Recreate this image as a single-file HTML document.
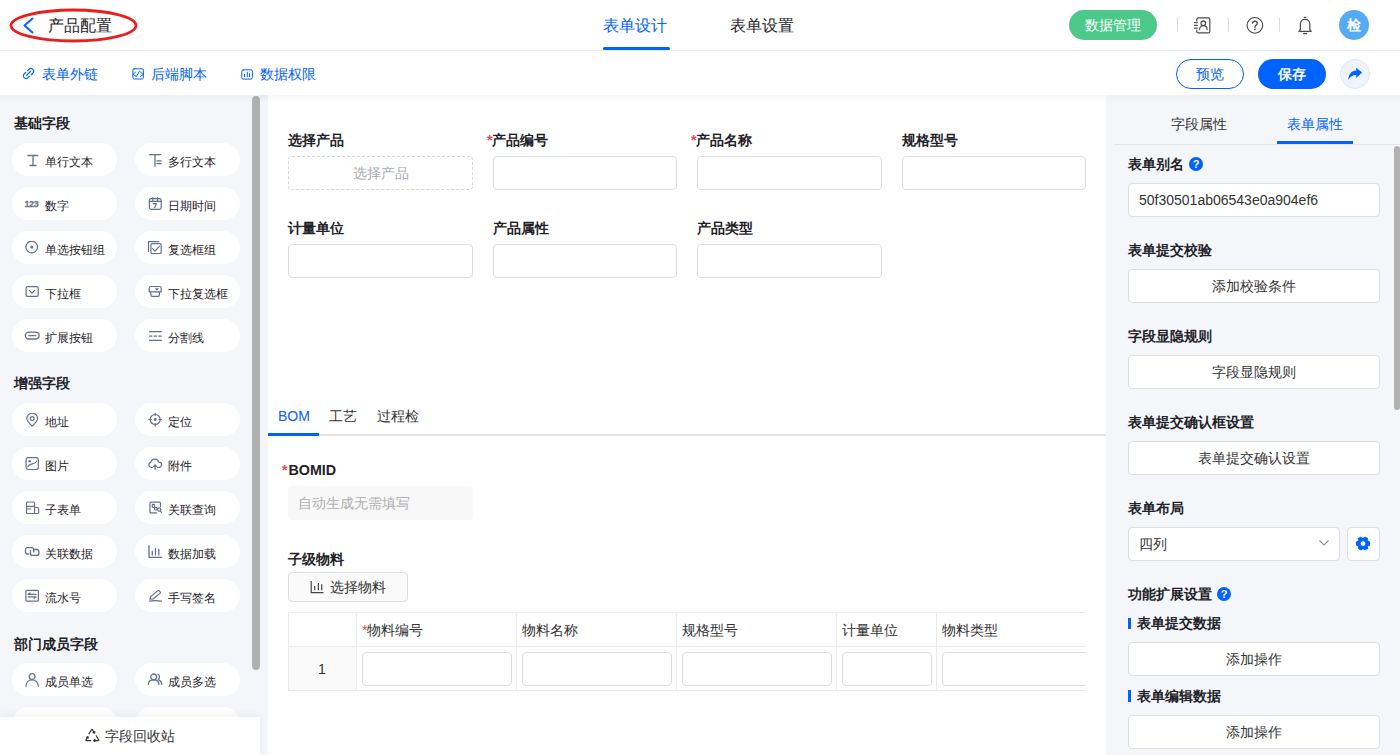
<!DOCTYPE html>
<html><head><meta charset="utf-8">
<style>
*{box-sizing:border-box;margin:0;padding:0}
html,body{width:1400px;height:755px;overflow:hidden;background:#f4f6fa;font-family:"Liberation Sans",sans-serif;color:#333;font-size:14px}
.a{position:absolute}
.t{position:absolute;white-space:nowrap;line-height:20px}
#hdr{left:0;top:0;width:1400px;height:51px;background:#fff;border-bottom:1px solid #ebedf0}
#tb{left:0;top:51px;width:1400px;height:44px;background:#fff;box-shadow:0 2px 6px rgba(0,0,0,.04)}
#left{left:0;top:95px;width:260px;height:660px;background:#f4f6fa}
#canvas{left:268px;top:95px;width:838px;height:660px;background:#fff}
#right{left:1106px;top:95px;width:294px;height:660px;background:#f4f6fa}
.h{font-weight:bold;color:#1f2329;font-size:14px}
.chip{position:absolute;width:105px;height:33px;background:#fff;border-radius:17px}
.chip .ic{position:absolute;left:12px;top:10px;width:16px;height:16px}
.chip .lb{position:absolute;left:33px;top:11px;font-size:12px;line-height:17px;color:#1f2329;white-space:nowrap}
.lbl{position:absolute;font-weight:bold;color:#1f2329;font-size:14px;line-height:20px;white-space:nowrap}
.star{color:#e5484d;font-weight:bold}
.inp{position:absolute;width:185px;height:34px;background:#fff;border:1px solid #dddddd;border-radius:4px}
.rbtn{position:absolute;left:1128px;width:252px;height:34px;background:#fff;border:1px solid #dedede;border-radius:4px;text-align:center;line-height:32px;color:#333;font-size:14px}
.rl{position:absolute;left:1128px;font-weight:bold;color:#1f2329;font-size:14px;line-height:20px;white-space:nowrap}
.q{position:absolute;width:14px;height:14px;border-radius:50%;background:#0062ff;color:#fff;font-size:11px;font-weight:bold;line-height:14px;text-align:center}
.th{position:absolute;top:612px;height:34px;line-height:34px;font-size:14px;color:#333;white-space:nowrap}
.tinp{position:absolute;top:652px;height:34px;background:#fff;border:1px solid #dddddd;border-radius:4px}
</style></head><body>
<div id="hdr" class="a"></div>
<div id="tb" class="a"></div>
<div id="left" class="a"></div>
<div id="canvas" class="a"></div>
<div id="right" class="a"></div>

<!-- LEFT PANEL -->
<div class="a" style="left:0;top:95px;width:1400px;height:9px;background:linear-gradient(rgba(0,0,0,.03),rgba(0,0,0,0));z-index:5"></div>
<div class="t h" style="left:14px;top:112.5px">基础字段</div>
<div class="chip" style="left:12px;top:143px"><svg class="ic" width="16" height="16" viewBox="0 0 16 16" fill="none" stroke="#66708a" stroke-width="1.3" stroke-linecap="round" stroke-linejoin="round"><path d="M4 2.5 H13.8 M9 2.5 V12.5 M6 12.5 H12"/></svg><div class="lb">单行文本</div></div>
<div class="chip" style="left:135px;top:143px"><svg class="ic" width="16" height="16" viewBox="0 0 16 16" fill="none" stroke="#66708a" stroke-width="1.3" stroke-linecap="round" stroke-linejoin="round"><path d="M2.4 1.6 H13.6 M8 1.6 V13.2 M9.9 7.9 H14.2 M9.9 10.6 H14.2"/></svg><div class="lb">多行文本</div></div>
<div class="chip" style="left:12px;top:187px"><svg class="ic" width="18" height="14" viewBox="0 0 18 14" style="left:12px;top:10px"><text x="0.5" y="9.6" font-family="Liberation Sans" font-weight="bold" font-size="10.2" letter-spacing="-0.4" fill="#6f7891" stroke="#6f7891" stroke-width="0.35">123</text></svg><div class="lb">数字</div></div>
<div class="chip" style="left:135px;top:187px"><svg class="ic" width="16" height="16" viewBox="0 0 16 16" fill="none" stroke="#66708a" stroke-width="1.2" stroke-linecap="round" stroke-linejoin="round"><rect x="2.4" y="1.6" width="11.8" height="10.8" rx="1.8"/><path d="M2.4 4.4 H14.2 M5.9 0.6 V3.6 M10.5 0.6 V3.6 M6 6.6 H9.4 L7.7 10.6"/></svg><div class="lb">日期时间</div></div>
<div class="chip" style="left:12px;top:231px"><svg class="ic" width="16" height="16" viewBox="0 0 16 16" fill="none" stroke="#66708a" stroke-width="1.2" stroke-linecap="round" stroke-linejoin="round"><circle cx="7.7" cy="6" r="5.8"/><circle cx="7.7" cy="6" r="1.5" fill="#66708a" stroke="none"/></svg><div class="lb">单选按钮组</div></div>
<div class="chip" style="left:135px;top:231px"><svg class="ic" width="16" height="16" viewBox="0 0 16 16" fill="none" stroke="#66708a" stroke-width="1.2" stroke-linecap="round" stroke-linejoin="round"><path d="M1.5 10.5 V0.6 H11.8"/><rect x="3.9" y="2.7" width="10.3" height="9.8" rx="1.3"/><path d="M5.5 7.6 L8 10 L12.4 5.3"/></svg><div class="lb">复选框组</div></div>
<div class="chip" style="left:12px;top:275px"><svg class="ic" width="16" height="16" viewBox="0 0 16 16" fill="none" stroke="#66708a" stroke-width="1.2" stroke-linecap="round" stroke-linejoin="round"><rect x="2.1" y="1.6" width="12.1" height="9.8" rx="1.3"/><path d="M5.3 5.3 L8 8 L10.6 5.3"/></svg><div class="lb">下拉框</div></div>
<div class="chip" style="left:135px;top:275px"><svg class="ic" width="16" height="16" viewBox="0 0 16 16" fill="none" stroke="#66708a" stroke-width="1.2" stroke-linecap="round" stroke-linejoin="round"><path d="M3.8 6.8 H2.2 V2.9 Q2.2 1.5 3.6 1.5 H12.8 Q14.2 1.5 14.2 2.9 V6.8 H12.4 M3.8 6.8 H12.4 V9.9 Q12.4 11.3 11 11.3 H5.2 Q3.8 11.3 3.8 9.9 Z M8.8 3.4 L9.9 4.8 L11 3.4"/></svg><div class="lb">下拉复选框</div></div>
<div class="chip" style="left:12px;top:319px"><svg class="ic" width="16" height="16" viewBox="0 0 16 16" fill="none" stroke="#66708a" stroke-width="1.3" stroke-linecap="round" stroke-linejoin="round"><rect x="1.3" y="3.2" width="13.8" height="6.8" rx="3.4"/><path d="M4.8 6.6 H11.7"/></svg><div class="lb">扩展按钮</div></div>
<div class="chip" style="left:135px;top:319px"><svg class="ic" width="16" height="16" viewBox="0 0 16 16" fill="none" stroke="#66708a" stroke-width="1.3" stroke-linecap="round" stroke-linejoin="round"><path d="M2.6 2.7 H14.3 M2.6 7.1 H4.8 M6.9 7.1 H9.6 M11.7 7.1 H14.3 M2.6 11.4 H14.3"/></svg><div class="lb">分割线</div></div>
<div class="t h" style="left:14px;top:372.7px">增强字段</div>
<div class="chip" style="left:12px;top:403px"><svg class="ic" width="16" height="16" viewBox="0 0 16 16" fill="none" stroke="#66708a" stroke-width="1.2" stroke-linecap="round" stroke-linejoin="round"><path d="M8.2 13 C4.6 9.8 2.8 7.8 2.8 5.5 A5.4 5.4 0 0 1 13.6 5.5 C13.6 7.8 11.8 9.8 8.2 13 Z"/><circle cx="8.2" cy="5.5" r="1.9"/></svg><div class="lb">地址</div></div>
<div class="chip" style="left:135px;top:403px"><svg class="ic" width="16" height="16" viewBox="0 0 16 16" fill="none" stroke="#66708a" stroke-width="1.2" stroke-linecap="round" stroke-linejoin="round"><circle cx="8.2" cy="6.5" r="5"/><circle cx="8.2" cy="6.5" r="0.9" fill="#66708a"/><path d="M8.2 0.2 V2.6 M8.2 10.4 V12.8 M1.9 6.5 H4.3 M12.1 6.5 H14.5"/></svg><div class="lb">定位</div></div>
<div class="chip" style="left:12px;top:447px"><svg class="ic" width="16" height="16" viewBox="0 0 16 16" fill="none" stroke="#66708a" stroke-width="1.2" stroke-linecap="round" stroke-linejoin="round"><rect x="2.1" y="0.7" width="12.2" height="11.8" rx="2"/><path d="M3.8 9.8 C4.6 7.4 6 7.2 8.5 6.8 C10.5 6.4 11.8 5.6 12.6 4.3"/><circle cx="5.8" cy="4.3" r="0.7" fill="#66708a"/></svg><div class="lb">图片</div></div>
<div class="chip" style="left:135px;top:447px"><svg class="ic" width="16" height="16" viewBox="0 0 16 16" fill="none" stroke="#66708a" stroke-width="1.2" stroke-linecap="round" stroke-linejoin="round"><path d="M5.6 10.5 H4.2 A2.6 2.6 0 0 1 3.8 5.4 A4.1 4.1 0 0 1 11.8 5.1 A2.7 2.7 0 0 1 12 10.5 H10.6 M8.1 12.6 V8 M6.4 9.6 L8.1 7.9 L9.8 9.6"/></svg><div class="lb">附件</div></div>
<div class="chip" style="left:12px;top:491px"><svg class="ic" width="16" height="16" viewBox="0 0 16 16" fill="none" stroke="#66708a" stroke-width="1.2" stroke-linecap="round" stroke-linejoin="round"><path d="M10.6 12.5 H3.5 Q2.5 12.5 2.5 11.5 V2 Q2.5 1 3.5 1 H9.6 Q10.6 1 10.6 2 V12.5 H13.6 Q14.6 12.5 14.6 11.5 V7.5 Q14.6 6.5 13.6 6.5 H10.6 M2.5 5.3 H10.6 M2.5 8 H6.9"/></svg><div class="lb">子表单</div></div>
<div class="chip" style="left:135px;top:491px"><svg class="ic" width="16" height="16" viewBox="0 0 16 16" fill="none" stroke="#66708a" stroke-width="1.2" stroke-linecap="round" stroke-linejoin="round"><path d="M9.7 11.8 H4.2 Q2.9 11.8 2.9 10.5 V2.5 Q2.9 1.2 4.2 1.2 H12.2 Q13.5 1.2 13.5 2.5 V5.6"/><rect x="5.3" y="3.3" width="2.2" height="3.2" rx="0.5"/><rect x="7.6" y="6.6" width="2.4" height="2.4" rx="0.5"/><circle cx="12.2" cy="8.5" r="1.6"/><path d="M13.3 9.8 L14.4 11.5"/></svg><div class="lb">关联查询</div></div>
<div class="chip" style="left:12px;top:535px"><svg class="ic" width="16" height="16" viewBox="0 0 16 16" fill="none" stroke="#66708a" stroke-width="1.3" stroke-linecap="round" stroke-linejoin="round"><path d="M4.8 9 H3.5 Q1.5 9 1.5 7 V4.7 Q1.5 2.7 3.5 2.7 H7.7 Q9.7 2.7 9.7 4.7 V7 M6.5 5.6 V8.4 Q6.5 10.4 8.5 10.4 H12.8 Q14.8 10.4 14.8 8.4 V6.5 Q14.8 4.5 12.8 4.5 H10"/></svg><div class="lb">关联数据</div></div>
<div class="chip" style="left:135px;top:535px"><svg class="ic" width="16" height="16" viewBox="0 0 16 16" fill="none" stroke="#66708a" stroke-width="1.3" stroke-linecap="round" stroke-linejoin="round"><path d="M2 0.6 V12.4 H14.7 M5.3 6.2 V10 M8.5 3.4 V10 M11.8 4.2 V10"/></svg><div class="lb">数据加载</div></div>
<div class="chip" style="left:12px;top:579px"><svg class="ic" width="16" height="16" viewBox="0 0 16 16" fill="none" stroke="#66708a" stroke-width="1.2" stroke-linecap="round" stroke-linejoin="round"><rect x="1.9" y="1.4" width="12.5" height="10.7" rx="1"/><path d="M4.1 5.3 H12 M4.1 5.3 L6 3.9 M4.1 7.9 H12 L10.2 9.3"/></svg><div class="lb">流水号</div></div>
<div class="chip" style="left:135px;top:579px"><svg class="ic" width="16" height="16" viewBox="0 0 16 16" fill="none" stroke="#66708a" stroke-width="1.2" stroke-linecap="round" stroke-linejoin="round"><path d="M3 10.2 L3.6 7.6 L10.9 1.6 Q11.4 1.2 11.9 1.7 L13.3 3.2 Q13.7 3.7 13.2 4.1 L6 10 Z M2.6 12.2 C6 11.4 10 11.4 14.5 12.2"/></svg><div class="lb">手写签名</div></div>
<div class="t h" style="left:14px;top:633.5px">部门成员字段</div>
<div class="chip" style="left:12px;top:663px"><svg class="ic" width="16" height="16" viewBox="0 0 16 16" fill="none" stroke="#66708a" stroke-width="1.3" stroke-linecap="round" stroke-linejoin="round"><circle cx="8.1" cy="3.6" r="2.9"/><path d="M2 13.2 C2 9 5 6.8 8.1 6.8 C11.2 6.8 14.4 9 14.4 13.2"/></svg><div class="lb">成员单选</div></div>
<div class="chip" style="left:135px;top:663px"><svg class="ic" width="16" height="16" viewBox="0 0 16 16" fill="none" stroke="#66708a" stroke-width="1.3" stroke-linecap="round" stroke-linejoin="round"><circle cx="6.7" cy="3.9" r="2.9"/><path d="M1.4 11.6 C1.4 8.5 3.8 6.8 6.7 6.8 C9.6 6.8 11.9 8.5 11.9 11.6 M11 1.3 C12.8 1.9 13 5.4 11.3 6.4 M11.8 7 C13.6 7.6 14.7 9.5 14.7 11.6"/></svg><div class="lb">成员多选</div></div>
<div class="chip" style="left:12px;top:707px"><div class="lb"></div></div>
<div class="chip" style="left:135px;top:707px"><div class="lb"></div></div>
<div class="a" style="left:252px;top:96px;width:8px;height:574px;border-radius:4px;background:#b1b1b1"></div>
<div class="a" style="left:0;top:717px;width:260px;height:38px;background:#fff;box-shadow:0 -2px 8px rgba(0,0,0,.06)"></div>
<svg class="a" style="left:85px;top:728px" width="15" height="14" viewBox="0 0 15 14" fill="none" stroke="#333" stroke-width="1.2" stroke-linecap="round" stroke-linejoin="round"><path d="M4 5.8 L6.6 1.6 Q7 1 7.4 1.6 L9.6 5.2 M9.6 5.2 L9.8 3.6 M9.6 5.2 L8.1 4.7"/><path d="M11.2 7.8 L13.7 12 Q14 12.6 13.3 12.6 H8.6 M8.6 12.6 L9.9 11.5 M8.6 12.6 L9.9 13.6"/><path d="M5.6 12.6 H1.3 Q0.7 12.6 1 12 L2.9 8.6 M2.9 8.6 L1.6 9.2 M2.9 8.6 L3.2 10.1"/></svg>
<div class="t" style="left:105px;top:726px;color:#333">字段回收站</div>
<!-- CANVAS -->
<div class="lbl" style="left:288px;top:130px">选择产品</div>
<div class="lbl" style="left:487px;top:130px"><span class="star">*</span>产品编号</div>
<div class="lbl" style="left:691px;top:130px"><span class="star">*</span>产品名称</div>
<div class="lbl" style="left:902px;top:130px">规格型号</div>
<div class="a" style="left:288px;top:156px;width:185px;height:34px;border:1px dashed #d6d6d6;border-radius:4px;background:#fff;color:#a8abb2;text-align:center;line-height:32px;font-size:14px">选择产品</div>
<div class="inp" style="left:493px;top:156px;width:184px"></div>
<div class="inp" style="left:697px;top:156px"></div>
<div class="inp" style="left:902px;top:156px;width:184px"></div>
<div class="lbl" style="left:288px;top:218px">计量单位</div>
<div class="lbl" style="left:493px;top:218px">产品属性</div>
<div class="lbl" style="left:697px;top:218px">产品类型</div>
<div class="inp" style="left:288px;top:244px"></div>
<div class="inp" style="left:493px;top:244px;width:184px"></div>
<div class="inp" style="left:697px;top:244px"></div>
<div class="t" style="left:278px;top:406px;color:#0062ff">BOM</div>
<div class="t" style="left:329px;top:406px;color:#333">工艺</div>
<div class="t" style="left:377px;top:406px;color:#333">过程检</div>
<div class="a" style="left:268px;top:434px;width:838px;height:2px;background:#e4e4e4"></div>
<div class="a" style="left:268px;top:433px;width:51px;height:3px;background:#0062ff"></div>
<div class="lbl" style="left:282px;top:460px"><span class="star">*</span><span style="margin-left:1px;font-size:14.3px">BOMID</span></div>
<div class="a" style="left:288px;top:486px;width:185px;height:34px;border-radius:4px;background:#f8f8f8;color:#b0b0b0;line-height:34px;padding-left:10px;font-size:14px">自动生成无需填写</div>
<div class="lbl" style="left:288px;top:549px">子级物料</div>
<div class="a" style="left:288px;top:572px;width:120px;height:30px;border-radius:4px;border:1px solid #dddddd;background:#fafafa"></div>
<svg class="a" style="left:310px;top:580px" width="15" height="14" viewBox="0 0 15 14" fill="none" stroke="#444" stroke-width="1.2"><path d="M1.2 1 V12.6 H13.5 M4.7 6 V10.3 M8.4 2.9 V10.3 M11.7 4.2 V10.3"/></svg>
<div class="t" style="left:330px;top:577px;color:#333">选择物料</div>
<div class="a" style="left:288px;top:612px;width:798px;height:79px;border:1px solid #ebebeb;border-right:none;background:#fff"></div>
<div class="a" style="left:289px;top:646px;width:67px;height:44px;background:#fafafa"></div>
<div class="a" style="left:288px;top:646px;width:798px;height:1px;background:#ebebeb"></div>
<div class="a" style="left:356px;top:612px;width:1px;height:78px;background:#ebebeb"></div>
<div class="a" style="left:516px;top:612px;width:1px;height:78px;background:#ebebeb"></div>
<div class="a" style="left:676px;top:612px;width:1px;height:78px;background:#ebebeb"></div>
<div class="a" style="left:836px;top:612px;width:1px;height:78px;background:#ebebeb"></div>
<div class="a" style="left:936px;top:612px;width:1px;height:78px;background:#ebebeb"></div>
<div class="t" style="left:318px;top:659px;color:#333">1</div>
<div class="t" style="left:362px;top:620px;color:#333"><span style="color:#e54545">*</span>物料编号</div>
<div class="t" style="left:522px;top:620px;color:#333">物料名称</div>
<div class="t" style="left:682px;top:620px;color:#333">规格型号</div>
<div class="t" style="left:842px;top:620px;color:#333">计量单位</div>
<div class="t" style="left:942px;top:620px;color:#333">物料类型</div>
<div class="tinp" style="left:362px;width:150px"></div>
<div class="tinp" style="left:522px;width:150px"></div>
<div class="tinp" style="left:682px;width:150px"></div>
<div class="tinp" style="left:842px;width:90px"></div>
<div class="tinp" style="left:942px;width:150px"></div>
<div class="a" style="left:1086px;top:600px;width:20px;height:100px;background:#fff"></div>
<!-- RIGHT PANEL -->
<div class="t" style="left:1171px;top:114px;color:#333">字段属性</div>
<div class="t" style="left:1287px;top:114px;color:#0062ff">表单属性</div>
<div class="a" style="left:1114px;top:144px;width:286px;height:1px;background:#e1e4ea"></div>
<div class="a" style="left:1277px;top:141px;width:76px;height:3px;background:#0062ff"></div>
<div class="a" style="left:1394px;top:146px;width:6px;height:264px;border-radius:3px;background:#b1b1b1"></div>
<div class="rl" style="top:154px">表单别名</div>
<div class="q" style="left:1189px;top:157px">?</div>
<div class="a" style="left:1128px;top:183px;width:252px;height:34px;background:#fff;border:1px solid #dedede;border-radius:4px;line-height:33px;padding-left:10px;color:#333;font-size:14px">50f30501ab06543e0a904ef6</div>
<div class="rl" style="top:240px">表单提交校验</div>
<div class="rbtn" style="top:269px">添加校验条件</div>
<div class="rl" style="top:326px">字段显隐规则</div>
<div class="rbtn" style="top:355px">字段显隐规则</div>
<div class="rl" style="top:412px">表单提交确认框设置</div>
<div class="rbtn" style="top:441px">表单提交确认设置</div>
<div class="rl" style="top:498px">表单布局</div>
<div class="a" style="left:1128px;top:527px;width:212px;height:34px;background:#fff;border:1px solid #dedede;border-radius:4px;line-height:32px;padding-left:10px;color:#333;font-size:14px">四列</div>
<svg class="a" style="left:1318px;top:539px" width="12" height="8" viewBox="0 0 12 8"><path d="M1.5 1.5 L6 6 L10.5 1.5" fill="none" stroke="#8a8f99" stroke-width="1.1"/></svg>
<div class="a" style="left:1347px;top:527px;width:33px;height:34px;background:#fff;border:1px solid #dedede;border-radius:4px"></div>
<svg class="a" style="left:1355px;top:535px" width="16" height="17" viewBox="0 0 16 16.6"><path fill="#0062ff" stroke="#0062ff" stroke-width="1.1" stroke-linejoin="round" fill-rule="evenodd" d="M12.16 5.60 L14.55 6.61 L14.55 9.39 L12.16 10.40 L12.48 12.98 L10.07 14.37 L8.00 12.80 L5.93 14.37 L3.52 12.98 L3.84 10.40 L1.45 9.39 L1.45 6.61 L3.84 5.60 L3.52 3.02 L5.93 1.63 L8.00 3.20 L10.07 1.63 L12.48 3.02 Z M8 5.1 A2.9 2.9 0 1 0 8 10.9 A2.9 2.9 0 1 0 8 5.1 Z" transform="translate(0 0.3)"/></svg>
<div class="rl" style="top:584px">功能扩展设置</div>
<div class="q" style="left:1217px;top:587px">?</div>
<div class="a" style="left:1128px;top:618px;width:3px;height:11px;background:#0062ff"></div>
<div class="rl" style="left:1137px;top:613px">表单提交数据</div>
<div class="rbtn" style="top:642px">添加操作</div>
<div class="a" style="left:1128px;top:690px;width:3px;height:12px;background:#0062ff"></div>
<div class="rl" style="left:1137px;top:686px">表单编辑数据</div>
<div class="rbtn" style="top:715px">添加操作</div>
<!-- HEADER -->
<svg class="a" style="left:0;top:0" width="160" height="50" viewBox="0 0 160 50">
<ellipse cx="73.5" cy="25.5" rx="62.5" ry="15.5" fill="none" stroke="#ee1c1c" stroke-width="2.8"/>
<path d="M32.5 18.5 L24.5 25.5 L32.5 32.5" fill="none" stroke="#0062ff" stroke-width="2" stroke-linecap="round" stroke-linejoin="round"/>
</svg>
<div class="t" style="left:48px;top:15px;font-size:16px;line-height:22px;color:#1f2329">产品配置</div>
<div class="t" style="left:603px;top:15px;font-size:16px;line-height:22px;color:#0062ff">表单设计</div>
<div class="a" style="left:603px;top:47px;width:67px;height:3px;border-radius:2px;background:#0062ff"></div>
<div class="t" style="left:730px;top:15px;font-size:16px;line-height:22px;color:#1f2329">表单设置</div>
<div class="a" style="left:1069px;top:10px;width:88px;height:30px;border-radius:15px;background:#4cc98a;color:#fff;text-align:center;line-height:30px;font-size:14px">数据管理</div>
<div class="a" style="left:1177px;top:18px;width:1px;height:14px;background:#d9d9d9"></div>
<div class="a" style="left:1228px;top:18px;width:1px;height:14px;background:#d9d9d9"></div>
<div class="a" style="left:1279px;top:18px;width:1px;height:14px;background:#d9d9d9"></div>
<svg class="a" style="left:1192px;top:16px" width="20" height="19" viewBox="0 0 20 19" fill="none" stroke="#4a4a4a" stroke-width="1.2" stroke-linecap="round">
<path d="M4.8 5 V3.3 Q4.8 1.8 6.3 1.8 H16.3 Q17.8 1.8 17.8 3.3 V15.4 Q17.8 16.9 16.3 16.9 H6.3 Q4.8 16.9 4.8 15.4 V14"/>
<circle cx="11.3" cy="7.2" r="2.3"/>
<path d="M7.6 13.6 C7.6 11 9.3 9.7 11.3 9.7 C13.3 9.7 15.1 11 15.1 13.6"/>
<path d="M2.6 6.6 H5.3 M2.6 9.4 H5.3 M2.6 12.2 H5.3"/>
</svg>
<svg class="a" style="left:1245px;top:16px" width="20" height="19" viewBox="0 0 20 19">
<circle cx="9.9" cy="9.35" r="7.85" fill="none" stroke="#4a4a4a" stroke-width="1.15"/>
<path d="M7.5 7.2 C7.5 4.6 12.3 4.6 12.3 7.2 C12.3 9 10 9.2 10 11.3" fill="none" stroke="#4a4a4a" stroke-width="1.3" stroke-linecap="round"/>
<circle cx="10" cy="13.4" r="0.85" fill="#4a4a4a"/>
</svg>
<svg class="a" style="left:1296px;top:15px" width="18" height="21" viewBox="0 0 18 21" fill="none" stroke="#4a4a4a" stroke-width="1.2" stroke-linecap="round" stroke-linejoin="round">
<path d="M3 16.3 L4.4 14.3 V9 C4.4 6 6.2 4.4 9.1 4.4 C12 4.4 13.8 6 13.8 9 V14.3 L15.2 16.3 Z"/>
<path d="M8.4 2.3 H9.8 M7.6 18.6 H10.6"/>
</svg>
<div class="a" style="left:1339px;top:10px;width:30px;height:30px;border-radius:50%;background:#55abf2;color:#fff;text-align:center;line-height:30px;font-size:14px;font-weight:bold">检</div>

<!-- TOOLBAR -->
<svg class="a" style="left:22px;top:67px" width="13" height="13" viewBox="0 0 13 13">
<path d="M4.6 8.3 L8.4 4.5 M5.6 3.6 L6.9 2.3 C8 1.2 9.7 1.2 10.8 2.3 C11.9 3.4 11.9 5.1 10.8 6.2 L9.5 7.5 M7.4 9.4 L6.1 10.7 C5 11.8 3.3 11.8 2.2 10.7 C1.1 9.6 1.1 7.9 2.2 6.8 L3.5 5.5" fill="none" stroke="#0062ff" stroke-width="1.2" stroke-linecap="round"/>
</svg>
<div class="t" style="left:42px;top:64px;color:#0062ff">表单外链</div>
<svg class="a" style="left:131px;top:67px" width="15" height="15" viewBox="0 0 15 15" fill="none" stroke="#0062ff" stroke-width="1" stroke-linejoin="round" stroke-linecap="round"><rect x="1.9" y="1.8" width="10.5" height="10.2" rx="1.3"/><path d="M4.5 5 L2 7.5 L5.4 9.4 L8.4 4.2 L12.3 7.5 L9.3 9.4"/></svg>
<div class="t" style="left:151px;top:64px;color:#0062ff">后端脚本</div>
<svg class="a" style="left:240px;top:67px" width="15" height="15" viewBox="0 0 15 15" fill="none" stroke="#0062ff" stroke-width="1" stroke-linecap="round"><rect x="1.8" y="2.8" width="10.6" height="9.3" rx="1.5"/><path d="M4.5 7.4 V9.8 M7.3 5.2 V9.8 M9.5 6.6 V9.8"/></svg>
<div class="t" style="left:260px;top:64px;color:#0062ff">数据权限</div>
<div class="a" style="left:1176px;top:59px;width:68px;height:30px;border-radius:15px;border:1px solid #0062ff;background:#fff;color:#0062ff;text-align:center;line-height:28px;font-size:14px">预览</div>
<div class="a" style="left:1258px;top:59px;width:68px;height:30px;border-radius:15px;background:#0062ff;color:#fff;text-align:center;line-height:30px;font-size:14px;font-weight:bold">保存</div>
<div class="a" style="left:1340px;top:59px;width:30px;height:30px;border-radius:50%;background:#eef3fe;border:1px solid #dde6fb"></div>
<svg class="a" style="left:1347px;top:66px" width="16" height="16" viewBox="0 0 16 16">
<path d="M15 6.6 L9.3 1.7 V4.4 C4.5 4.7 1.4 8 1.3 13.9 C3 10.6 5.6 9.1 9.3 9.1 V11.9 Z" fill="#0062ff"/>
</svg>

</body></html>
